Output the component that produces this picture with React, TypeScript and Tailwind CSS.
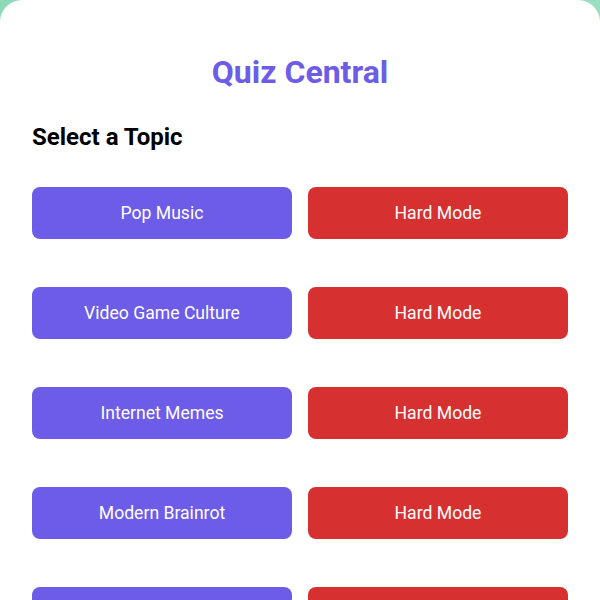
import React from 'react'

const topics = [
  'Pop Music',
  'Video Game Culture',
  'Internet Memes',
  'Modern Brainrot',
  'Movies & TV',
]

export default function App() {
  return (
    <div className="min-h-screen bg-gradient-to-br from-[#8ed9b8] to-[#a6e3c9] font-['Roboto',sans-serif]">
      <div className="bg-white rounded-t-[22px] min-h-screen px-8 pt-[54px] pb-8">
        {/* Header */}
        <h1 className="text-[32px] leading-9 font-bold text-[#6c5ce7] text-center">
          Quiz Central
        </h1>
        <h2 className="mt-[31px] text-2xl leading-8 font-bold text-black">
          Select a Topic
        </h2>

        {/* Topics */}
        <div className="mt-[34px] flex flex-col gap-12">
          {topics.map((topic) => (
            <div key={topic} className="grid grid-cols-2 gap-4">
              <button className="h-[52px] rounded-lg bg-[#6c5ce7] text-white text-[17.6px]">
                {topic}
              </button>
              <button className="h-[52px] rounded-lg bg-[#d63031] text-white text-[17.6px]">
                Hard Mode
              </button>
            </div>
          ))}
        </div>
      </div>
    </div>
  )
}
